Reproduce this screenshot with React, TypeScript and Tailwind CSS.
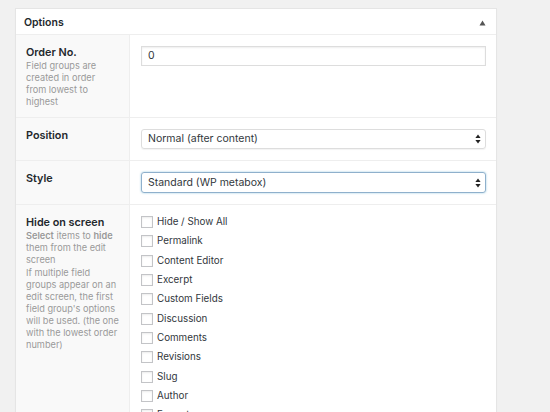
import React from "react";

const items = [
  "Hide / Show All",
  "Permalink",
  "Content Editor",
  "Excerpt",
  "Custom Fields",
  "Discussion",
  "Comments",
  "Revisions",
  "Slug",
  "Author",
  "Format",
];

function Arrows() {
  return (
    <svg width="6" height="10" viewBox="0 0 6 10" className="shrink-0">
      <path d="M3 0.5 L5.6 4 L0.4 4 Z" fill="#222" />
      <path d="M3 9.5 L5.6 6 L0.4 6 Z" fill="#222" />
    </svg>
  );
}

export default function App() {
  return (
    <div
      className="w-[550px] h-[412px] overflow-hidden bg-[#f1f1f1] pt-[8px] pl-[15px]"
      style={{ fontFamily: "Inter, 'Liberation Sans', sans-serif" }}
    >
      <div className="w-[482px] bg-white border border-[#e5e5e5] shadow-[0_1px_1px_rgba(0,0,0,0.04)]">
        <div className="h-[26px] flex items-center justify-between pl-[8px] pr-[10px] pt-[2px] border-b border-[#eee]">
          <span className="text-[10.5px] font-semibold text-[#23282d]">Options</span>
          <svg width="7" height="6" viewBox="0 0 7 6">
            <path d="M3.5 0.5 L6.5 5.5 L0.5 5.5 Z" fill="#555" />
          </svg>
        </div>

        <div className="grid grid-cols-[114px_1fr]">
          {/* Row 1 */}
          <div className="bg-[#f9f9f9] border-r border-[#eee] pl-[10px] pr-[16px] pt-[11px] pb-[9px]">
            <div className="text-[10.8px] leading-[13px] font-semibold text-[#23282d]">Order No.</div>
            <div className="mt-[1px] text-[9.2px] leading-[12px] text-[#999]">
              Field groups are created in order from lowest to highest
            </div>
          </div>
          <div className="pl-[11px] pr-[10px] pt-[11px]">
            <div className="h-[20px] border border-[#ddd] shadow-[inset_0_1px_2px_rgba(0,0,0,0.07)] flex items-center pl-[6px] text-[10.5px] text-[#32373c]">
              0
            </div>
          </div>

          {/* Row 2 */}
          <div className="bg-[#f9f9f9] border-r border-t border-[#eee] pl-[10px] pt-[11px] pb-[11px]">
            <div className="text-[10.8px] leading-[13px] font-semibold text-[#23282d]">Position</div>
          </div>
          <div className="border-t border-[#eee] pl-[11px] pr-[10px] pt-[11px] pb-[11px]">
            <div className="h-[20px] rounded-[3px] border border-[#ddd] shadow-[0_1px_1px_rgba(0,0,0,0.05)] flex items-center justify-between pl-[6px] pr-[4px] text-[10.5px] text-[#32373c]">
              <span>Normal (after content)</span>
              <Arrows />
            </div>
          </div>

          {/* Row 3 */}
          <div className="bg-[#f9f9f9] border-r border-t border-[#eee] pl-[10px] pt-[11px] pb-[11px]">
            <div className="text-[10.8px] leading-[13px] font-semibold text-[#23282d]">Style</div>
          </div>
          <div className="border-t border-[#eee] pl-[11px] pr-[10px] pt-[11px] pb-[11px]">
            <div className="h-[21px] rounded-[3px] border border-[#8fb0cc] shadow-[0_0_2px_rgba(30,140,190,0.5)] flex items-center justify-between pl-[6px] pr-[4px] text-[10.5px] text-[#32373c]">
              <span>Standard (WP metabox)</span>
              <Arrows />
            </div>
          </div>

          {/* Row 4 */}
          <div className="bg-[#f9f9f9] border-r border-t border-[#eee] pl-[10px] pr-[8px] pt-[11px] pb-[40px]">
            <div className="text-[10.8px] leading-[13px] font-semibold text-[#23282d]">Hide on screen</div>
            <div className="mt-[1px] text-[9.2px] leading-[12px] text-[#999] pr-[4px]">
              <b className="font-semibold">Select</b> items to <b className="font-semibold">hide</b> them from the edit screen
            </div>
            <div className="mt-[1px] text-[9.2px] leading-[12px] text-[#999]">
              If multiple field groups appear on an edit screen, the first field group's options will be used. (the one with the lowest order number)
            </div>
          </div>
          <div className="border-t border-[#eee] pl-[11px] pt-[11px]">
            <div className="flex flex-col gap-[7.35px]">
              {items.map((t) => (
                <div key={t} className="flex items-center gap-[4px] h-[12px]">
                  <span className="w-[12px] h-[12px] bg-white border border-[#c3c4c7] shadow-[inset_0_1px_2px_rgba(0,0,0,0.08)] shrink-0" />
                  <span className="text-[9.8px] text-[#32373c] leading-[12px]">{t}</span>
                </div>
              ))}
            </div>
          </div>
        </div>
      </div>
    </div>
  );
}
